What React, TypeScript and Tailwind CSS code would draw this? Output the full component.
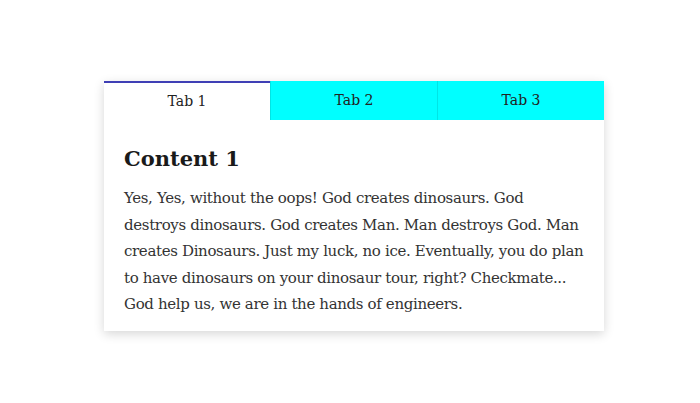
import { useState } from "react";

const tabs = [
  {
    label: "Tab 1",
    title: "Content 1",
    lines: [
      "Yes, Yes, without the oops! God creates dinosaurs. God",
      "destroys dinosaurs. God creates Man. Man destroys God. Man",
      "creates Dinosaurs. Just my luck, no ice. Eventually, you do plan",
      "to have dinosaurs on your dinosaur tour, right? Checkmate...",
      "God help us, we are in the hands of engineers.",
    ],
  },
  { label: "Tab 2", title: "Content 2", lines: [] },
  { label: "Tab 3", title: "Content 3", lines: [] },
];

export default function App() {
  const [active, setActive] = useState(0);
  const current = tabs[active];

  return (
    <div
      className="min-h-[403px] w-[700px] bg-white pl-[104px] pt-[81px]"
      style={{ fontFamily: '"DejaVu Serif", serif' }}
    >
      <div className="w-[500px] bg-white shadow-[0_3px_10px_rgba(0,0,0,0.16)]">
        <div className="flex">
          {tabs.map((tab, i) => (
            <button
              key={tab.label}
              onClick={() => setActive(i)}
              className={
                i === active
                  ? "h-[39px] flex-1 border-t-2 border-[#3f3fb5] bg-white text-[14px] text-[#222]"
                  : "h-[39px] flex-1 border-l border-[#00e5e5] bg-[#00ffff] text-[14px] text-[#222] first:border-l-0"
              }
            >
              {tab.label}
            </button>
          ))}
        </div>
        <div className="px-5 pb-[13px] pt-[24px]">
          <h2 className="text-[21px] font-bold leading-[30px] text-[#1a1a1a]">{current.title}</h2>
          <p className="mt-[11px] whitespace-nowrap text-[15px] leading-[26.5px] tracking-[-0.35px] text-[#333]">
            {current.lines.map((line, i) => (
              <span key={i}>
                {line}
                {i < current.lines.length - 1 && <br />}
              </span>
            ))}
          </p>
        </div>
      </div>
    </div>
  );
}
